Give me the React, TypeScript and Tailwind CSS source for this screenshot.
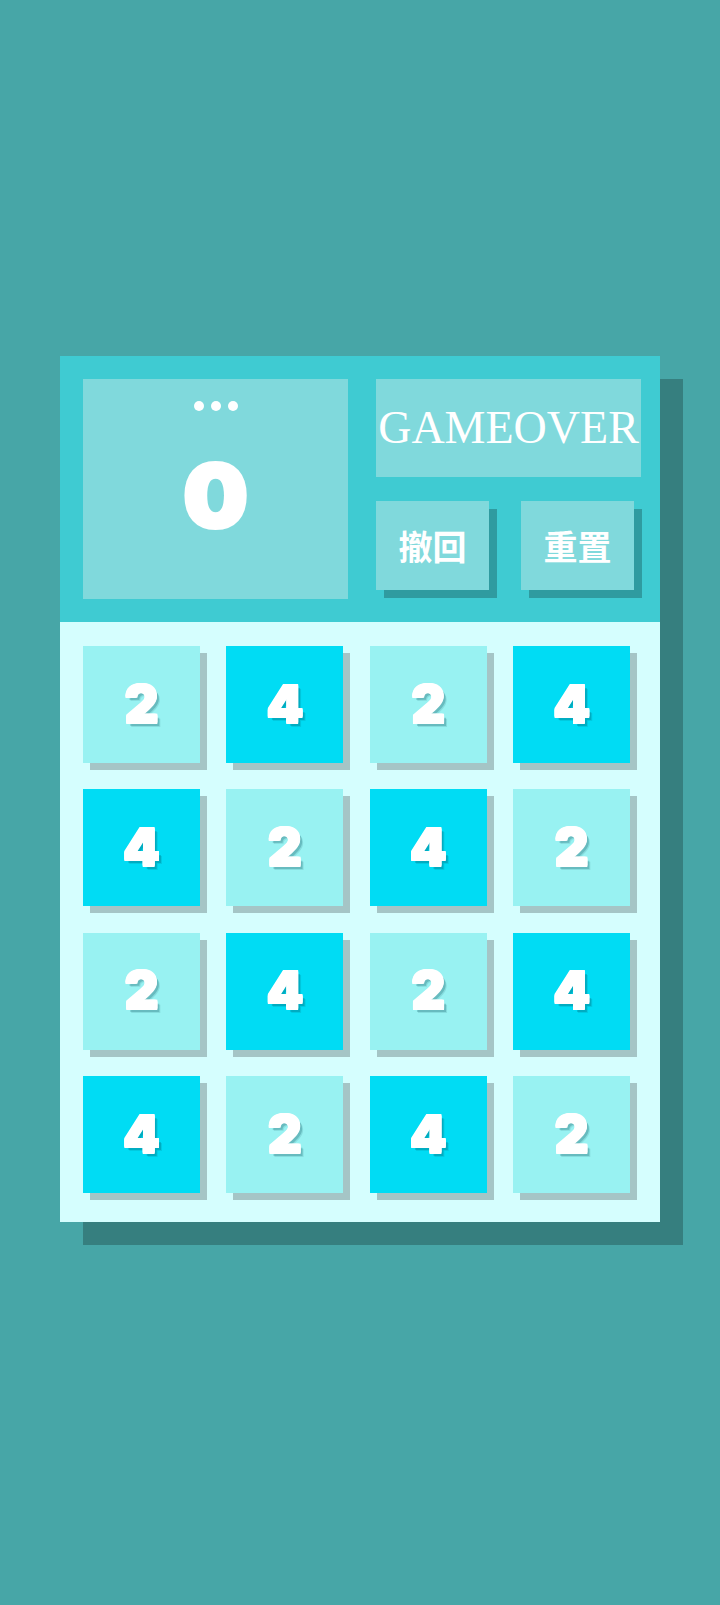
const tiles = [2, 4, 2, 4, 4, 2, 4, 2, 2, 4, 2, 4, 4, 2, 4, 2];

function Tile({ value }: { value: number }) {
  const dark = value === 4;
  return (
    <div
      className={`flex h-[117px] w-[117px] items-center justify-center shadow-[7px_7px_0_#a5c5c6] ${dark ? 'bg-[#00dcf4]' : 'bg-[#98f2f2]'}`}
    >
      <span className="font-['Inter','Noto_Sans',sans-serif] text-[52px] font-black leading-none text-white [text-shadow:1px_0_0_#fff,-1px_0_0_#fff,0_1px_0_#fff,0_-1px_0_#fff,1px_1px_0_#fff,-1px_-1px_0_#fff,1px_-1px_0_#fff,-1px_1px_0_#fff,3px_3px_0_rgba(0,70,80,0.22),4px_4px_0_rgba(0,70,80,0.12)]">
        {value}
      </span>
    </div>
  );
}

function ActionButton({ label }: { label: string }) {
  return (
    <button className="flex h-[89px] w-[113px] items-center justify-center bg-[#80d9dc] shadow-[8px_8px_0_#2f9ba0] font-['Noto_Sans_CJK_SC',sans-serif] text-[34px] font-bold text-white">
      {label}
    </button>
  );
}

export default function App() {
  return (
    <div className="flex min-h-[1605px] w-full justify-center bg-[#47a6a7] pt-[356px]">
      <div className="h-fit w-[600px] shadow-[23px_23px_0_#367f7f]">
        <div className="flex gap-[28px] bg-[#3fcbd2] pb-[23px] pl-[23px] pt-[23px]">
          <div className="flex h-[220px] w-[265px] flex-col items-center bg-[#80d9dc] pt-[22px]">
            <div className="flex gap-[7px]">
              <span className="h-[10px] w-[10px] rounded-full bg-white" />
              <span className="h-[10px] w-[10px] rounded-full bg-white" />
              <span className="h-[10px] w-[10px] rounded-full bg-white" />
            </div>
            <span className="mt-[42px] scale-x-[1.05] font-['Inter','Noto_Sans',sans-serif] text-[86px] font-black leading-none text-white [-webkit-text-stroke:4px_white]">
              0
            </span>
          </div>
          <div className="flex w-[265px] flex-col">
            <div className="flex h-[98px] items-center justify-center whitespace-nowrap bg-[#80d9dc] font-['Liberation_Serif',serif] text-[46px] leading-none text-white">
              GAMEOVER
            </div>
            <div className="mt-[24px] flex gap-[32px]">
              <ActionButton label="撤回" />
              <ActionButton label="重置" />
            </div>
          </div>
        </div>
        <div className="grid h-[600px] grid-cols-[repeat(4,117px)] content-start gap-x-[26.4px] gap-y-[26.4px] bg-[#d5fefe] pl-[23px] pt-[24px]">
          {tiles.map((v, i) => (
            <Tile key={i} value={v} />
          ))}
        </div>
      </div>
    </div>
  );
}
